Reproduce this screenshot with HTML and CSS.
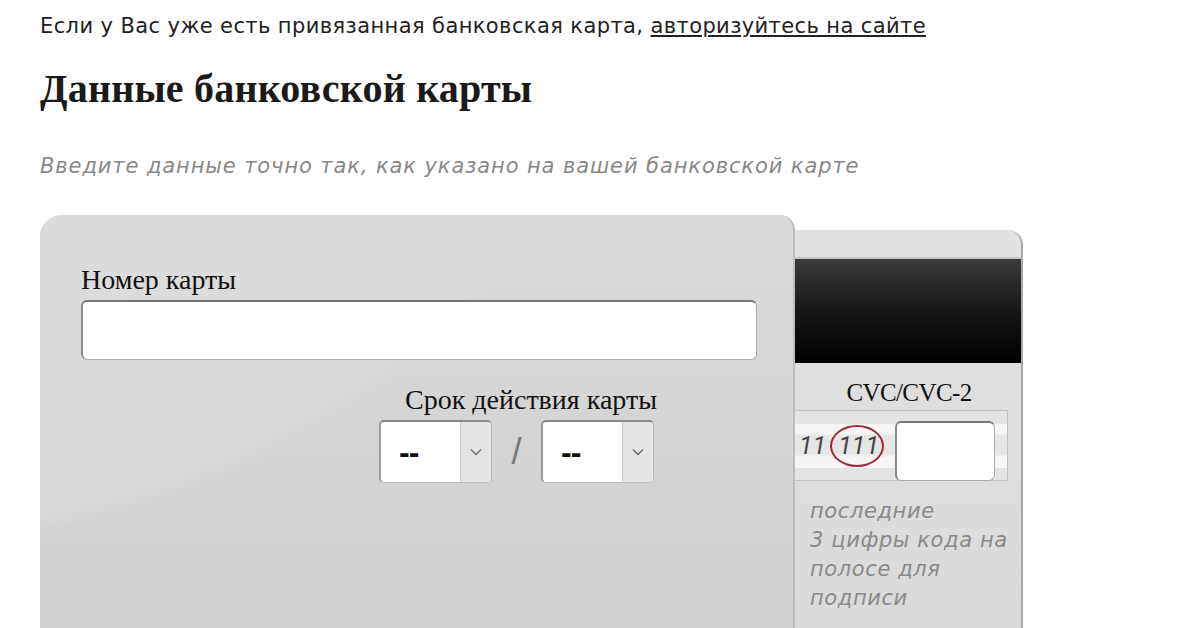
FILE: index.html
```html
<!DOCTYPE html>
<html lang="ru">
<head>
    <meta charset="UTF-8">
    <title>Данные банковской карты</title>
    <link rel="stylesheet" href="styles.css">
</head>
<body>
    <p class="intro">Если у Вас уже есть привязанная банковская карта, <a href="#">авторизуйтесь на сайте</a></p>
    <h1 class="title">Данные банковской карты</h1>
    <p class="hint">Введите данные точно так, как указано на вашей банковской карте</p>

    <div class="cards">
        <div class="card-front">
            <label class="field-label" for="card-number">Номер карты</label>
            <input class="card-number" id="card-number" type="text">

            <div class="expiry">
                <div class="field-label">Срок действия карты</div>
                <div class="expiry-row">
                    <div class="select">
                        <span class="select-value">--</span>
                        <span class="select-arrow">
                            <svg width="12" height="8" viewBox="0 0 12 8"><path d="M1 1.5 L6 6.5 L11 1.5" fill="none" stroke="#666" stroke-width="1.3"/></svg>
                        </span>
                    </div>
                    <span class="slash">/</span>
                    <div class="select">
                        <span class="select-value">--</span>
                        <span class="select-arrow">
                            <svg width="12" height="8" viewBox="0 0 12 8"><path d="M1 1.5 L6 6.5 L11 1.5" fill="none" stroke="#666" stroke-width="1.3"/></svg>
                        </span>
                    </div>
                </div>
            </div>
        </div>

        <div class="card-back">
            <div class="stripe"></div>
            <div class="cvc-label">CVC/CVC-2</div>
            <div class="cvc-row">
                <div class="signature">
                    <span class="digits-old">11</span>
                    <span class="digits">111</span>
                </div>
                <input class="cvc-input" type="text">
            </div>
            <p class="cvc-hint">последние<br>3 цифры кода на полосе для подписи</p>
        </div>
    </div>
</body>
</html>
```
FILE: styles.css
```css
body {
    margin: 0;
    padding: 10px 0 0 40px;
    font-family: "DejaVu Sans", Verdana, sans-serif;
    color: #222;
    background-color: #fff;
    overflow: hidden;
}

.intro {
    margin: 0;
    font-size: 21px;
    line-height: 32px;
    letter-spacing: 0.4px;
}

.intro a {
    color: #222;
    text-decoration: underline;
}

.title {
    margin: 24px 0 0;
    font-family: "Liberation Serif", "Times New Roman", serif;
    font-size: 40px;
    line-height: 46px;
    font-weight: bold;
    letter-spacing: 0.2px;
    color: #1a1a1a;
}

.hint {
    margin: 40px 0 0;
    font-size: 21px;
    line-height: 28px;
    letter-spacing: 0.9px;
    font-style: italic;
    color: #888;
}

.cards {
    display: flex;
    align-items: flex-start;
    margin-top: 35px;
}

.card-front {
    position: relative;
    z-index: 1;
    width: 755px;
    height: 440px;
    box-sizing: border-box;
    padding: 49px 38px 0 41px;
    border-radius: 22px 15px 0 0;
    border-right: 2px solid #bdbdbd;
    background:
        radial-gradient(ellipse 800px 640px at -200px -300px, #dedede 0, #dbdbdb 96%, rgba(210, 210, 210, 0) 100%),
        linear-gradient(#dadada, #cfcfcf);
    display: flex;
    flex-direction: column;
}

.field-label {
    display: block;
    font-family: "Liberation Serif", "Times New Roman", serif;
    font-size: 28px;
    line-height: 32px;
    color: #111;
}

.card-number {
    margin-top: 4px;
    width: 676px;
    height: 60px;
    box-sizing: border-box;
    border: 1px solid #aaa;
    border-top: 2px solid #777;
    border-left: 2px solid #888;
    border-radius: 6px;
    background-color: #fff;
    outline: none;
}

.expiry {
    margin: 24px 0 0 298px;
    display: flex;
    flex-direction: column;
    align-items: flex-end;
    width: 278px;
}

.expiry-row {
    display: flex;
    align-items: center;
    margin: 4px 3px 0 0;
}

.select {
    display: flex;
    width: 113px;
    height: 63px;
    box-sizing: border-box;
    border: 1px solid #bbb;
    border-top: 2px solid #888;
    border-left: 2px solid #999;
    border-radius: 5px;
    background-color: #fff;
    overflow: hidden;
}

.select-value {
    flex: 1;
    padding-left: 18px;
    font-family: "Liberation Sans", Arial, sans-serif;
    font-size: 32px;
    font-weight: bold;
    line-height: 60px;
    letter-spacing: -1px;
    color: #111;
}

.select-arrow {
    width: 30px;
    display: flex;
    align-items: center;
    justify-content: center;
    background-color: #e4e4e4;
    border-left: 1px solid #ccc;
}

.slash {
    width: 49px;
    text-align: center;
    font-family: "Liberation Sans", Arial, sans-serif;
    font-size: 36px;
    color: #777;
}

.card-back {
    margin-top: 15px;
    width: 228px;
    height: 440px;
    box-sizing: border-box;
    border-right: 2px solid #a8a8a8;
    border-radius: 0 15px 0 0;
    background: linear-gradient(#e2e2e2, #d9d9d9);
}

.stripe {
    margin-top: 27px;
    height: 104px;
    border-top: 2px solid #c4c4c4;
    background: linear-gradient(#3a3a3a, #161616 50%, #000 100%);
}

.cvc-label {
    margin-top: 15px;
    text-align: center;
    font-family: "Liberation Serif", "Times New Roman", serif;
    font-size: 25px;
    line-height: 30px;
    color: #111;
    letter-spacing: -0.6px;
    padding-left: 2px;
}

.cvc-row {
    position: relative;
    margin-top: 2px;
    width: 213px;
    height: 71px;
    box-sizing: border-box;
    border: 1px solid #c2c2c2;
    border-left: none;
    display: flex;
    align-items: center;
    background-color: #e4e4e4;
}

.signature {
    width: 100%;
    height: 44px;
    display: flex;
    align-items: center;
    background: linear-gradient(#f6f6f6 0, #f6f6f6 9px, #e6e6e6 12px, #e6e6e6 30px, #f6f6f6 33px, #f6f6f6 44px);
    font-family: Roboto, "Open Sans", sans-serif;
    font-size: 25px;
    font-style: italic;
    color: #444;
}

.digits-old {
    padding-left: 4px;
    line-height: 30px;
}

.digits {
    position: relative;
    margin-left: 12px;
    line-height: 30px;
}

.digits::before {
    content: "";
    position: absolute;
    left: -8px;
    top: -6px;
    width: 54px;
    height: 42px;
    box-sizing: border-box;
    border: 2px solid #a4283a;
    border-radius: 50%;
}

.cvc-input {
    position: absolute;
    left: 100px;
    top: 10px;
    width: 100px;
    height: 60px;
    box-sizing: border-box;
    border: 1px solid #aaa;
    border-top: 2px solid #777;
    border-left: 2px solid #888;
    border-radius: 6px;
    background-color: #fff;
    outline: none;
}

.cvc-hint {
    margin: 16px 0 0 15px;
    width: 205px;
    font-size: 21px;
    line-height: 29px;
    letter-spacing: 0.6px;
    font-style: italic;
    color: #8a8a8a;
}
```
